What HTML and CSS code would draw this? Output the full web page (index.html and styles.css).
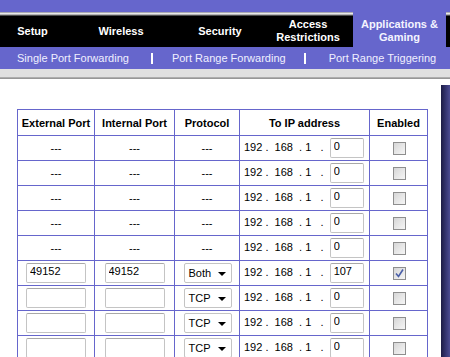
FILE: index.html
```html
<!DOCTYPE html>
<html lang="en">
<head>
    <meta charset="UTF-8">
    <meta name="viewport" content="width=device-width, initial-scale=1.0">
    <title>Applications &amp; Gaming</title>
    <link rel="stylesheet" href="styles.css">
</head>
<body>
    <header>
        <nav class="tabs">
            <div class="tab t-setup">Setup</div>
            <div class="tab t-wireless">Wireless</div>
            <div class="tab t-security">Security</div>
            <div class="tab t-access">Access<br>Restrictions</div>
            <div class="tab t-apps active">Applications &amp;<br>Gaming</div>
            <div class="tab t-end"></div>
        </nav>
        <nav class="subnav">
            <span class="sub s1">Single Port Forwarding</span>
            <span class="bar"></span>
            <span class="sub s2">Port Range Forwarding</span>
            <span class="bar"></span>
            <span class="sub s3">Port Range Triggering</span>
        </nav>
        <div class="band"></div>
    </header>
    <main class="content">
        <table class="ports">
            <colgroup>
                <col class="c-ext">
                <col class="c-int">
                <col class="c-proto">
                <col class="c-ip">
                <col class="c-en">
            </colgroup>
            <thead>
                <tr>
                    <th>External Port</th>
                    <th>Internal Port</th>
                    <th>Protocol</th>
                    <th>To IP address</th>
                    <th>Enabled</th>
                </tr>
            </thead>
            <tbody id="rows"></tbody>
        </table>
        <div class="edge"></div>
    </main>

    <script>
        const rows = [
            { fixed: true }, { fixed: true }, { fixed: true }, { fixed: true }, { fixed: true },
            { ext: '49152', int: '49152', proto: 'Both', ip: '107', on: true },
            { ext: '', int: '', proto: 'TCP', ip: '0' },
            { ext: '', int: '', proto: 'TCP', ip: '0' },
            { ext: '', int: '', proto: 'TCP', ip: '0' }
        ]
        const body = document.getElementById('rows')
        const ipCell = (last) => `<td class="ip">192 .&nbsp; 168&nbsp; . 1&nbsp;&nbsp; .&nbsp; <input class="box oct" value="${last}"></td>`
        const check = (on) => `<td class="mid"><span class="check">${on ? '<svg width="11" height="11" viewBox="0 0 11 11"><path d="M2 5.5 L4.5 8.5 L9 1.5" fill="none" stroke="#4a5fa8" stroke-width="1.6"/></svg>' : ''}</span></td>`

        rows.forEach((r) => {
            const tr = document.createElement('tr')
            if (r.fixed) {
                tr.innerHTML = `<td class="mid">---</td><td class="mid">---</td><td class="mid">---</td>${ipCell('0')}${check(false)}`
            } else {
                tr.innerHTML = `<td class="mid"><input class="box port" value="${r.ext}"></td>
                    <td class="mid"><input class="box port" value="${r.int}"></td>
                    <td class="mid"><span class="select">${r.proto}</span></td>
                    ${ipCell(r.ip)}${check(r.on)}`
            }
            body.appendChild(tr)
        })
    </script>
</body>
</html>
```

FILE: styles.css
```css
*{
    margin: 0;
    padding: 0;
    box-sizing: border-box;
}
body{
    font-family: "Liberation Sans", Arial, sans-serif;
    font-size: 11px;
    background-color: white;
    overflow: hidden;
}
.tabs{
    display: flex;
    height: 47px;
}
.tab{
    display: flex;
    align-items: center;
    justify-content: center;
    text-align: center;
    padding-top: 15px;
    color: white;
    font-weight: bold;
    font-size: 11px;
    line-height: 13px;
    background: linear-gradient(to bottom, #6666cc 0, #6666cc 12px, #8a8a9a 12px, #e8e8e8 13.5px, #9a9a9a 15px, black 16px, black 100%);
}
.tab.active{
    background: #6666cc;
    color: #f4f4ff;
}
.t-setup{ width: 65px; }
.t-wireless{ width: 112px; }
.t-security{ width: 86px; }
.t-access{ width: 90px; }
.t-apps{ width: 93px; }
.t-end{ flex: 1; }
.subnav{
    display: flex;
    align-items: center;
    height: 22px;
    background-color: #6666cc;
    color: #f0f0ff;
    font-size: 11px;
}
.s1{ margin-left: 17px; }
.bar{
    width: 2px;
    height: 11px;
    background-color: white;
}
.subnav .bar:nth-of-type(2){ margin-left: 22px; }
.s2{ margin-left: 19px; }
.subnav .bar:nth-of-type(4){ margin-left: 18px; }
.s3{ margin-left: 23px; }
.band{
    height: 10px;
    background: linear-gradient(to bottom, #e0e0e0 0, #e0e0e0 8px, #b8b8b8 8px, #8c8c8c 10px);
}
.content{
    display: flex;
    align-items: flex-start;
    padding-left: 17px;
    height: 278px;
}
.ports{
    margin-top: 30px;
    width: 410px;
    border-collapse: collapse;
    table-layout: fixed;
}
.c-ext{ width: 77px; }
.c-int{ width: 80px; }
.c-proto{ width: 65px; }
.c-ip{ width: 130px; }
.c-en{ width: 58px; }
.ports th, .ports td{
    border: 1px solid #6666cc;
    height: 25px;
    font-size: 11px;
    color: black;
    white-space: nowrap;
}
.ports th{
    height: 26px;
    font-weight: bold;
    text-align: center;
}
.mid{
    text-align: center;
    vertical-align: middle;
}
.ip{
    padding-left: 4px;
    vertical-align: middle;
}
.box{
    font-family: "Liberation Sans", Arial, sans-serif;
    font-size: 11px;
    height: 20px;
    border: 1px solid #c4c4c4;
    border-top-color: #a8a8a8;
    border-radius: 2px;
    padding: 0 3px 4px;
    color: black;
    vertical-align: middle;
    outline: none;
}
.oct{
    width: 34px;
}
.port{
    width: 60px;
}
.select{
    display: inline-flex;
    align-items: center;
    width: 48px;
    height: 20px;
    border: 1px solid #c4c4c4;
    border-radius: 2px;
    padding-left: 4px;
    text-align: left;
    vertical-align: middle;
    position: relative;
    margin-left: 1px;
}
.select::after{
    content: "";
    position: absolute;
    right: 5px;
    top: 8px;
    border-left: 4px solid transparent;
    border-right: 4px solid transparent;
    border-top: 4px solid black;
}
.check{
    display: inline-block;
    width: 13px;
    height: 13px;
    border: 1px solid #8e8e8e;
    background: linear-gradient(to bottom right, #d6d6d6, #f6f6f6);
    vertical-align: middle;
    margin-left: 1px;
}
.check svg{
    display: block;
}
.edge{
    margin-left: auto;
    margin-top: 6px;
    width: 9px;
    align-self: stretch;
    background: linear-gradient(to right, #1c1c44, #33336e 50%, #4c4c92);
}
```
